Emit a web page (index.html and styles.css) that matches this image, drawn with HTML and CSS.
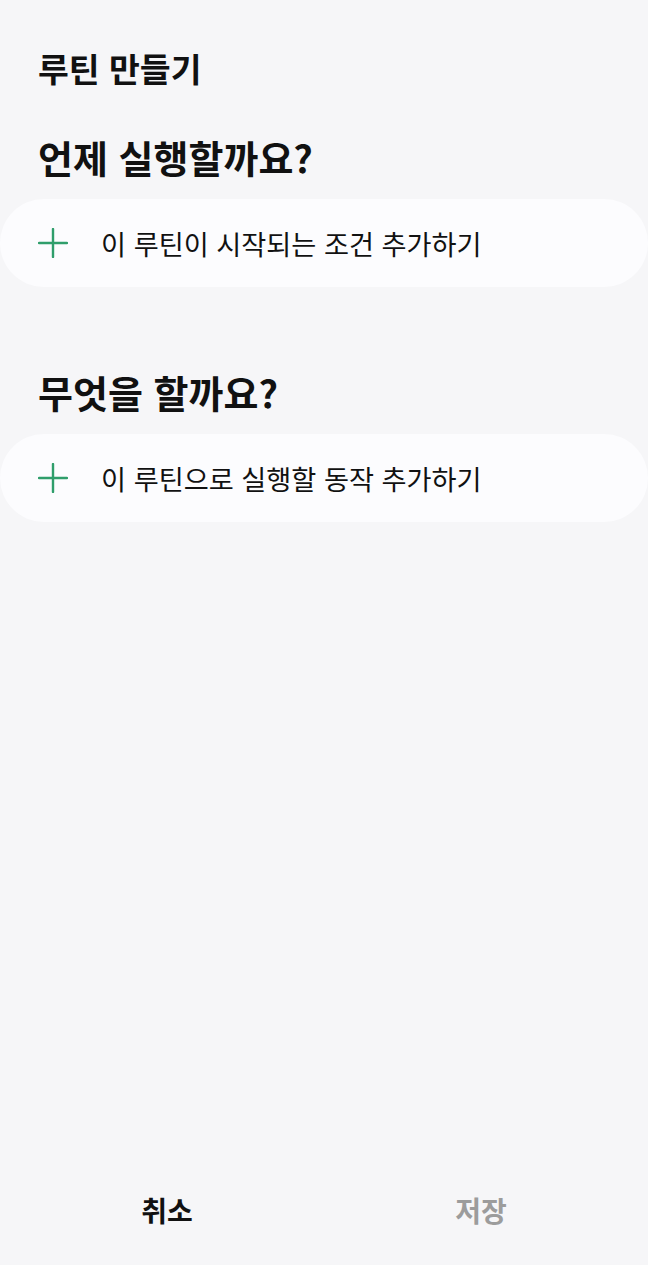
FILE: index.html
```html
<!DOCTYPE html>
<html lang="ko">
<head>
    <meta charset="UTF-8">
    <meta name="viewport" content="width=device-width, initial-scale=1.0">
    <title>루틴 만들기</title>
    <link rel="stylesheet" href="styles.css">
</head>
<body>
    <div class="page">
        <div class="header">
            <h1>루틴 만들기</h1>
        </div>

        <div class="section">
            <h2>언제 실행할까요?</h2>
            <div class="add-card">
                <svg class="plus-icon" viewBox="0 0 30 30" width="30" height="30">
                    <path d="M15 1 V29 M1 15 H29" stroke="#2f9e6b" stroke-width="2.4" stroke-linecap="round" fill="none"/>
                </svg>
                <span>이 루틴이 시작되는 조건 추가하기</span>
            </div>
        </div>

        <div class="section second">
            <h2>무엇을 할까요?</h2>
            <div class="add-card">
                <svg class="plus-icon" viewBox="0 0 30 30" width="30" height="30">
                    <path d="M15 1 V29 M1 15 H29" stroke="#2f9e6b" stroke-width="2.4" stroke-linecap="round" fill="none"/>
                </svg>
                <span>이 루틴으로 실행할 동작 추가하기</span>
            </div>
        </div>

        <div class="bottom-bar">
            <button class="bar-button">취소</button>
            <button class="bar-button disabled">저장</button>
        </div>
    </div>
</body>
</html>
```

FILE: styles.css
```css
body {
    font-family: "Noto Sans CJK KR", "Noto Sans", sans-serif;
    margin: 0;
    padding: 0;
    background-color: #f6f6f8;
    color: #111;
}
.page {
    display: flex;
    flex-direction: column;
    height: 100vh;
}
.header {
    padding: 48px 38px 0;
}
.header h1 {
    margin: 0;
    font-size: 33.5px;
    line-height: 40px;
    font-weight: 700;
}
.section {
    margin-top: 46px;
}
.section.second {
    margin-top: 82px;
}
.section h2 {
    margin: 0 0 19px;
    padding: 0 38px;
    font-size: 38px;
    line-height: 46px;
    font-weight: 700;
}
.add-card {
    display: flex;
    align-items: center;
    gap: 33px;
    height: 88px;
    padding: 0 38px;
    background-color: #fcfcfe;
    border-radius: 44px;
}
.plus-icon {
    flex-shrink: 0;
}
.add-card span {
    font-size: 27.2px;
    color: #111;
}
.bottom-bar {
    margin-top: auto;
    display: flex;
    height: 110px;
    padding: 0 10px;
}
.bar-button {
    flex: 1;
    background: none;
    border: none;
    font-family: inherit;
    font-size: 28px;
    font-weight: 700;
    color: #111;
    cursor: pointer;
}
.bar-button.disabled {
    color: #9c9c9c;
}
```
